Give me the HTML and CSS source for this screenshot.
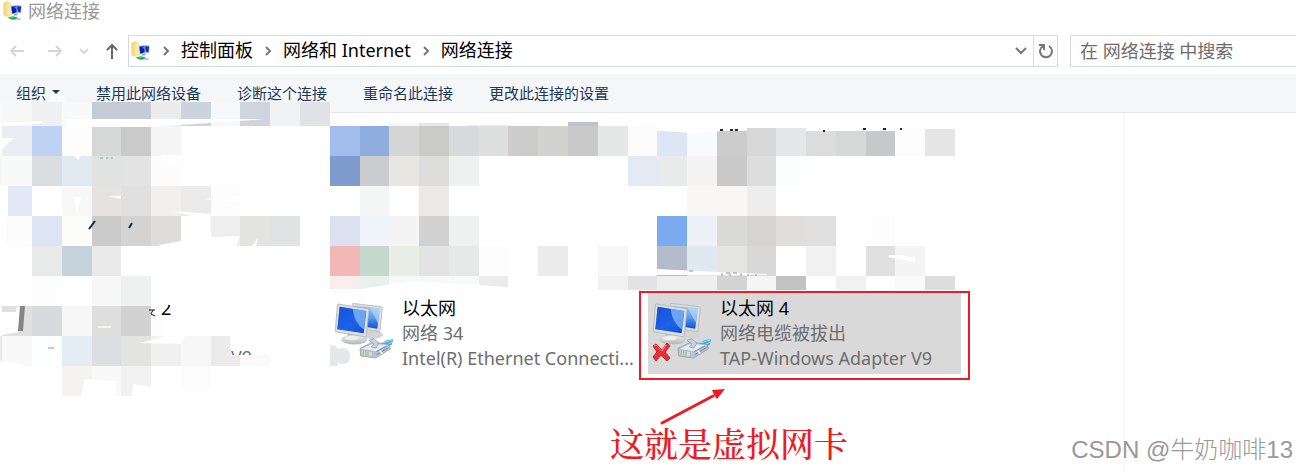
FILE: index.html
```
<!DOCTYPE html>
<html lang="zh-CN">
<head>
    <meta charset="UTF-8">
    <meta name="viewport" content="width=device-width, initial-scale=1.0">
    <title>网络连接</title>
    <link rel="stylesheet" href="styles.css">
</head>
<body>
    <svg class="defs" aria-hidden="true">
        <defs>
            <linearGradient id="screen" x1="0" y1="0" x2="1" y2="1">
                <stop offset="0" stop-color="#0b50cf"/>
                <stop offset="0.55" stop-color="#2470ee"/>
                <stop offset="1" stop-color="#0b45c8"/>
            </linearGradient>
            <linearGradient id="screenBack" x1="0" y1="0" x2="0" y2="1">
                <stop offset="0" stop-color="#9fcdf8"/>
                <stop offset="0.5" stop-color="#5a9cf0"/>
                <stop offset="1" stop-color="#0f4fd6"/>
            </linearGradient>
            <linearGradient id="stand" x1="0" y1="0" x2="0" y2="1">
                <stop offset="0" stop-color="#f2f3f3"/>
                <stop offset="1" stop-color="#b0b3b5"/>
            </linearGradient>
            <symbol id="folder" viewBox="0 0 60 60">
                <path d="M1 5l13-4 5 4 6 1v38l-11 4L1 43z" fill="#f3da83"/>
                <path d="M10 11l14-5v37l-10 6z" fill="#f9e9aa"/>
                <path d="M36 12l20 2-2 23-17-3z" fill="#8ca3cc"/>
                <path d="M39 15l15 2-2 16-13-2z" fill="#0c30bb"/>
                <path d="M22 14l20-3 2 25-18 5z" fill="#becce5"/>
                <path d="M25 17l15-3 1 20-13 4z" fill="#0821ae"/>
                <path d="M33 17l7-1v9z" fill="#4d8df0"/>
                <path d="M32 39l10-3 4 6-12 3z" fill="#aab6bd"/>
                <path d="M14 50l14-4 15 3-2 6-14 1z" fill="#25a64f"/>
                <path d="M22 49l7-2 4 3-7 2z" fill="#63d37b"/>
                <path d="M40 52h13v5H41z" fill="#b9c3cb"/>
            </symbol>
            <symbol id="computers" viewBox="15 45 195 195">
                <ellipse cx="139" cy="149" rx="35" ry="13" fill="#d3d4d5"/>
                <path d="M83 55l86 10q4 1 3 5l-7 67q-1 4-5 3l-70-12z" fill="#dcdedd" stroke="#a9adaf" stroke-width="2"/>
                <path d="M89 62l75 8-7 61-66-10z" fill="url(#screenBack)"/>
                <path d="M134 67l30 4-6 42z" fill="#c3e1fa" opacity=".6"/>
                <path d="M69 143h34l3 21H66z" fill="#b0b3b5"/>
                <ellipse cx="88" cy="164" rx="38" ry="14" fill="url(#stand)" stroke="#b4b6b8" stroke-width="1"/>
                <ellipse cx="80" cy="160" rx="20" ry="6" fill="#f6f7f7" opacity=".7"/>
                <path d="M40 57l89 14q4 1 3 5l-8 76q-1 4-5 3l-86-14q-3-1-2-5l6-76q0-3 3-3z" fill="#dedfdc" stroke="#a3a7a8" stroke-width="2"/>
                <path d="M44 65l80 13-8 67-79-12z" fill="url(#screen)"/>
                <path d="M83 72l40 6-6 56q-28-18-34-62z" fill="#84b8f8" opacity=".75"/>
                <path d="M44 65l39 7q3 36 24 70l-70-10z" fill="#1a55e2" opacity=".55"/>
                <path d="M164 181q15-18 41-18l-5 16-26 12z" fill="#35a9dd"/>
                <path d="M172 174l31-9M178 183l24-12" stroke="#a5e0f6" stroke-width="3"/>
                <path d="M105 190l37-18 48 5 7 14-45 28-45-6z" fill="#b7c5d2" stroke="#8493a8" stroke-width="2"/>
                <path d="M110 191l33-15 43 5-33 18z" fill="#e5edf3"/>
                <path d="M141 173l-9-7 13-5 17 13-9 15-14-3 8-9z" fill="#c3d2df" stroke="#8294a9" stroke-width="2"/>
                <path d="M109 195l33 5v16l-34-5z" fill="#d3dde5" stroke="#8694a6"/>
                <path d="M115 198l-1 12M122 199v12M129 200v12" stroke="#b3ba57" stroke-width="4"/>
                <path d="M154 200l31-17M155 209l35-21" stroke="#7288a0" stroke-width="3"/>
                <path d="M164 197l8 9" stroke="#f2f6fa" stroke-width="5"/>
            </symbol>
        </defs>
    </svg>

    <header class="title-bar">
        <svg class="app-icon" aria-hidden="true"><use href="#folder"/></svg>
        <h1>网络连接</h1>
    </header>

    <div class="nav-bar">
        <nav class="history">
            <button type="button" aria-label="后退"><svg width="16" height="14" viewBox="0 0 16 14"><path d="M15 7H2M7 2L2 7l5 5"/></svg></button>
            <button type="button" aria-label="前进"><svg width="16" height="14" viewBox="0 0 16 14"><path d="M1 7h13M9 2l5 5-5 5"/></svg></button>
            <button type="button" class="recent" aria-label="最近位置"><svg width="10" height="8" viewBox="0 0 10 8"><path d="M1 2l4 4 4-4"/></svg></button>
            <button type="button" class="up" aria-label="向上"><svg width="14" height="16" viewBox="0 0 14 16"><path d="M7 16V2M2 7l5-5 5 5"/></svg></button>
        </nav>
        <div class="address">
            <svg class="app-icon" aria-hidden="true"><use href="#folder"/></svg>
            <svg class="arrow" viewBox="0 0 8 10"><path d="M2 1l4 4-4 4"/></svg>
            <a href="#">控制面板</a>
            <svg class="arrow" viewBox="0 0 8 10"><path d="M2 1l4 4-4 4"/></svg>
            <a href="#">网络和 Internet</a>
            <svg class="arrow" viewBox="0 0 8 10"><path d="M2 1l4 4-4 4"/></svg>
            <a href="#">网络连接</a>
            <button type="button" class="drop" aria-label="以前的位置"><svg width="12" height="8" viewBox="0 0 12 8"><path d="M1 1l5 5 5-5"/></svg></button>
            <button type="button" class="refresh" aria-label="刷新"><svg width="16" height="16" viewBox="0 0 16 16"><path d="M11 3a6 6 0 1 1-6 0M1 2h5v5"/></svg></button>
        </div>
        <input class="search" type="search" aria-label="搜索" placeholder="在 网络连接 中搜索">
    </div>

    <div class="toolbar">
        <button type="button" class="organize">组织<span class="caret"></span></button>
        <button type="button">禁用此网络设备</button>
        <button type="button">诊断这个连接</button>
        <button type="button">重命名此连接</button>
        <button type="button">更改此连接的设置</button>
    </div>

    <main class="content">
        <ul class="connections">
            <li class="connection">
                <svg class="device" aria-hidden="true"><use href="#computers"/></svg>
                <div class="info">
                    <h2>以太网</h2>
                    <p>网络 34</p>
                    <p>Intel(R) Ethernet Connecti...</p>
                </div>
            </li>
            <li class="connection selected">
                <svg class="device" viewBox="0 0 65 65" aria-hidden="true">
                    <use href="#computers" width="65" height="65"/>
                    <path d="M5 46l3-2 6 6 5-7 3 3-5 6 5 6-3 3-6-6-5 6-3-4 4-5z" fill="#e8303a" stroke="#c4202a"/>
                    <path d="M6 46l2-1 6 6 4-6" fill="none" stroke="#f59294"/>
                </svg>
                <div class="info">
                    <h2>以太网 4</h2>
                    <p>网络电缆被拔出</p>
                    <p>TAP-Windows Adapter V9</p>
                </div>
            </li>
        </ul>
        <aside class="details"></aside>
    </main>

    <svg class="overlay" width="1296" height="472" viewBox="0 0 1296 472">
        <path d="M0 104L47 102l4-6h13l3 6 26 0h180l57 4v18H0z" fill="#f8f9fa"/>
        <path d="M330 116h12q10 0 10 6v4h-22z" fill="#fcfcfc"/>
        <g id="mosaic" shape-rendering="crispEdges"></g>

        <!-- eraser strokes -->
        <g fill="#fff">
            <path d="M67 119h150l48 0-55 4-60 4H67zM0 123l42-2v2l-40 3zM2 138l12 0-12 11zM74 156l4 4 3-4zM162 155h20v9l-15 3zM74 197h7l-4 18zM108 196h13v3zM203 199l37-3v6zM173 211l38 3v2h-20zM159 245l22-4v5h-22zM211 237l29-1-4 10h-25zM252 246l6-8-2 8z"/>
            <path d="M139 343l18-4 8-3h20l-4 8zM230 336h10v19h-10zM85 379l31 2v15H81zM133 384l18 3v10h-19zM17 307l5 1-4 24-16 3V312h14zM0 361l23 3v4H0z"/>
            <path d="M360 289l55-8 94 6v6H330v-4zM657 269l60 3 50 2v1H657zM890 255h10l15 3v4l-27-5zM657 125l4 6 35 2 52-4h-60z"/>
        </g>
        <path d="M20 306l5 0-2 25h-5z" fill="#858585"/>
        <path d="M89 229l6-8M129 228l3-5" stroke="#182434" stroke-width="2"/>
        <path d="M100 158h3m3 0h2m3 0h2M48 348h6" stroke="#889bad"/>
        <path d="M98 327h13" stroke="#f7f3ee" stroke-width="2"/>
        <path d="M149 310h6m-2 0l-2 4 4 2" stroke="#111" fill="none"/>
        <path d="M720 130h3m7 0h3m2 0h3m85 1h2m38-2h3m17 0h3m14 0h2" stroke="#26262b" stroke-width="2"/>
        <path d="M722 273v3m4-3h4v3m3-3h4m4 0v3m6-1h2m6 0h2M689 271h4" stroke="#929292" fill="none"/>
        <path d="M330 345q6 0 8 4 12-4 12 7t-12 7l-1 3h-7z" fill="#e6e7e9"/>
        <clipPath id="eraseTop"><path d="M158 305h20v15h-20z"/></clipPath>
        <clipPath id="eraseBottom"><path d="M231 345h30v10h-30z"/></clipPath>
        <text class="left-over dark" x="161" y="315" clip-path="url(#eraseTop)">2</text>
        <text class="left-over" x="231" y="364" clip-path="url(#eraseBottom)">V9</text>

        <!-- red annotation -->
        <rect x="640" y="292" width="329" height="87" fill="none" stroke="#ed1c24" stroke-width="2"/>
        <path d="M662 423l51-27" stroke="#ed1c24" stroke-width="3" stroke-linecap="round"/>
        <path d="M725 389l-8 10-3-4-2-5z" fill="#ed1c24"/>
        <text class="note" x="610" y="457">这就是虚拟网卡</text>
    </svg>
    <div class="watermark">CSDN @牛奶咖啡13</div>

    <script>
        // [上, 高, [左, 右, 颜色] ...]
        const rows = [
            [102, 24, [2, 32, "#f7f7f7"], [32, 62, "#eff0f2"], [62, 92, "#f8faf9"], [92, 151, "#c4cbd5"], [151, 181, "#ebecee"], [181, 211, "#ccd3dc"], [211, 240, "#f6f8fa"], [240, 270, "#cfd5df"], [270, 300, "#f1f2f4"], [300, 330, "#e1e2e6"]],
            [126, 30, [2, 32, "#ecedf3"], [32, 62, "#bed3f3"], [62, 92, "#fdfdfd"], [92, 121, "#d5d8d7"], [121, 151, "#cacaca"], [151, 181, "#f5f5f5"]],
            [156, 30, [0, 2, "#f3f6f4"], [2, 32, "#f8faf9"], [32, 62, "#dadee0"], [62, 92, "#e2eaf1"], [92, 121, "#e1e3e3"], [121, 151, "#e3e3e3"], [151, 181, "#fcfcfc"]],
            [186, 30, [8, 32, "#e2e8f6"], [62, 92, "#f8f8f8"], [92, 121, "#e5e3e2"], [121, 151, "#e0e0e1"], [151, 181, "#f2f0ef"], [181, 211, "#ebebeb"], [211, 240, "#fdfdfd"]],
            [216, 30, [6, 32, "#fcfcfc"], [32, 62, "#dce5f4"], [62, 92, "#fcfcfa"], [92, 121, "#cacaca"], [121, 151, "#d3d3d3"], [151, 181, "#dddcda"], [211, 240, "#eeeeee"], [240, 270, "#e3e3e1"], [270, 300, "#e1e2e4"]],
            [246, 30, [32, 62, "#e8eaea"], [62, 92, "#c5d1db"], [92, 121, "#e9e9e9"]],
            [276, 30, [32, 62, "#fdfdfd"], [92, 121, "#f7f7f7"], [121, 151, "#eff1f1"]],
            [306, 30, [2, 32, "#e0e0e0"], [32, 62, "#d9dadd"], [62, 92, "#f7f7f8"], [92, 121, "#dedede"], [121, 151, "#d2d2d2"], [151, 165, "#fdfdfd"]],
            [336, 30, [0, 2, "#eaeaea"], [2, 32, "#f9f9f9"], [32, 62, "#fdfeff"], [62, 92, "#e4edf4"], [92, 121, "#dcdee1"], [121, 151, "#e3e3e1"], [151, 181, "#f0f0f0"], [181, 211, "#f7f7f7"], [211, 240, "#ebebeb"]],
            [355, 11, [240, 270, "#fafafa"]],
            [366, 30, [62, 92, "#f4f3f2"], [92, 121, "#f9f9f9"], [121, 151, "#f1f1f1"]],
            [366, 24, [181, 211, "#fdfdfd"]],
            [123, 3, [389, 419, "#f7f7f7"], [419, 449, "#e7e7e7"]],
            [125, 1, [468, 508, "#e9ecec"]],
            [122, 4, [568, 598, "#bcc3cc"]],
            [126, 30, [330, 360, "#a2bdec"], [360, 389, "#90aedd"], [389, 419, "#d5d5d5"], [419, 449, "#cacac8"], [449, 479, "#d8dadd"], [479, 508, "#dce0df"], [508, 538, "#cccccc"], [538, 568, "#d2d2cf"], [568, 598, "#c9c9c9"], [598, 628, "#e5e8e7"], [628, 657, "#fcfcfc"]],
            [131, 25, [657, 687, "#dce6f4"], [687, 717, "#f8fbfd"], [717, 747, "#cccccc"]],
            [128, 28, [747, 776, "#d7d7d7"], [776, 806, "#e6e7e9"]],
            [131, 25, [806, 836, "#dcdcdc"], [836, 866, "#d6d8d7"], [866, 895, "#c7c8ca"], [895, 925, "#fdfdfd"]],
            [129, 27, [925, 955, "#e5e5e5"]],
            [156, 30, [330, 360, "#7e9ccd"], [360, 389, "#cbccce"], [389, 419, "#e7e6e1"], [419, 449, "#dddddc"], [449, 479, "#eef1f0"], [628, 657, "#e5e9f3"], [657, 687, "#e8ebea"], [687, 717, "#f4f4f4"], [717, 747, "#c9c9c9"], [747, 776, "#dddddd"], [776, 806, "#fcfefe"]],
            [186, 30, [360, 389, "#f3f6f5"], [419, 449, "#eae9e7"], [687, 747, "#f8f7f5"], [747, 776, "#ededed"]],
            [216, 30, [330, 360, "#dbe1f1"], [360, 389, "#f0f5f9"], [389, 419, "#f4f4f4"], [419, 449, "#d2d2d2"], [449, 479, "#eef1f0"], [657, 687, "#7caaf0"], [687, 717, "#edf1f7"], [717, 747, "#dadad8"], [747, 776, "#d5d4d2"], [776, 806, "#dfdedc"], [806, 836, "#e0e0e1"], [866, 895, "#fdfdfd"]],
            [246, 30, [330, 360, "#f2b8b8"], [360, 389, "#c4d8cc"], [389, 419, "#e9eee7"], [419, 449, "#e3e3e3"], [449, 479, "#e6e9e8"], [479, 508, "#fdfdfd"], [538, 568, "#ebebeb"], [598, 628, "#f7f7f7"], [657, 687, "#b4bbca"], [687, 717, "#e0e8f0"], [717, 747, "#e4e5e2"], [747, 776, "#d8d8d8"], [806, 836, "#f1f1f1"], [866, 895, "#e0e0e0"], [895, 925, "#f4f4f4"]],
            [276, 14, [330, 360, "#f9eeed"], [360, 389, "#e9f1ec"], [389, 449, "#f7f8f8"], [449, 479, "#f8faf9"], [479, 508, "#ebebeb"], [598, 628, "#f1f1f1"], [628, 657, "#e3e3e5"], [657, 717, "#efefef"], [717, 747, "#d3d3d3"], [747, 776, "#f5f5f5"], [776, 806, "#c2c2c2"], [836, 866, "#f1f1f1"], [895, 925, "#fafafa"], [925, 955, "#dddddd"]]
        ];
        const mosaic = document.getElementById("mosaic");
        rows.forEach(function([top, height, ...cells]) {
            cells.forEach(function([left, right, color]) {
                const rect = document.createElementNS("http://www.w3.org/2000/svg", "rect");
                rect.setAttribute("x", left);
                rect.setAttribute("y", top);
                rect.setAttribute("width", right - left);
                rect.setAttribute("height", height);
                rect.setAttribute("fill", color);
                mosaic.appendChild(rect);
            });
        });
    </script>
</body>
</html>
```
FILE: styles.css
```
* {
    box-sizing: border-box;
}
body {
    margin: 0;
    min-height: 100vh;
    display: flex;
    flex-direction: column;
    position: relative;
    overflow: hidden;
    background-color: #fff;
    color: #000;
    font-family: "Noto Sans", "Noto Sans CJK SC", sans-serif;
    font-size: 18px;
    font-weight: 400;
}
h1, h2, p, ul {
    margin: 0;
    padding: 0;
    font-size: 18px;
    font-weight: 400;
}
button {
    padding: 0;
    border: none;
    background: none;
    color: inherit;
    font: inherit;
}
a {
    color: inherit;
    text-decoration: none;
}
.defs {
    position: absolute;
    width: 0;
    height: 0;
}
.app-icon {
    width: 20px;
    height: 20px;
    flex: none;
}
.title-bar {
    display: flex;
    align-items: center;
    gap: 5px;
    height: 22px;
    padding-left: 3px;
    color: #999;
}
.title-bar h1 {
    line-height: 22px;
}
.nav-bar {
    display: flex;
    height: 32px;
    margin-top: 13px;
}
.history {
    display: flex;
    align-items: center;
    gap: 16px;
    width: 128px;
    padding-left: 9px;
}
.history button {
    display: flex;
}
.history svg, .address svg.arrow, .drop svg, .refresh svg {
    fill: none;
    stroke: #d5d5d5;
    stroke-width: 2;
}
.history button:nth-child(2) {
    margin-left: 6px;
}
.history .up svg {
    stroke: #666;
}
.address {
    display: flex;
    flex: 1;
    align-items: center;
    border: 1px solid #d9d9d9;
    padding-left: 2px;
    line-height: 28px;
}
.address a {
    margin-bottom: 2px;
}
.address svg.arrow {
    width: 8px;
    height: 10px;
    margin: 0 11px;
    stroke: #777;
}
.drop, .refresh {
    display: flex;
    align-items: center;
    justify-content: center;
    align-self: stretch;
    width: 24px;
}
.drop {
    margin-left: auto;
}
.refresh {
    border-left: 1px solid #d9d9d9;
}
.drop svg, .refresh svg {
    stroke: #777;
}
.search {
    width: 226px;
    margin-left: 12px;
    padding: 0 9px;
    border: 1px solid #d9d9d9;
    border-right: none;
    font: inherit;
}
.search::placeholder {
    color: #6d6d6d;
}
.toolbar {
    display: flex;
    gap: 36px;
    height: 39px;
    margin-top: 7px;
    padding: 0 16px 2px;
    border-bottom: 1px solid #e5e8eb;
    background-color: #f5f6f8;
    color: #1e395b;
    font-size: 15px;
}
.organize {
    display: flex;
    align-items: center;
    gap: 6px;
}
.caret {
    border: 4px solid transparent;
    border-top-color: #1e395b;
    border-bottom: none;
}
.content {
    display: flex;
    flex: 1;
}
.connections {
    display: grid;
    grid-template-columns: repeat(3, 313px);
    gap: 5px;
    flex: 1;
    align-content: start;
    padding: 180px 0 0 12px;
    list-style: none;
}
.connection {
    display: flex;
    gap: 7px;
    padding: 3px 0;
    white-space: nowrap;
}
.connection:first-child {
    grid-column: 2;
}
.selected {
    background-color: #d9d9d9;
}
.device {
    width: 65px;
    height: 65px;
    margin-top: 4px;
    flex: none;
}
.info h2, .info p {
    line-height: 25px;
}
.info p {
    color: #6d6d6d;
}
.details {
    width: 172px;
    border-left: 1px solid #f3f3f3;
}
.overlay {
    position: absolute;
    top: 0;
    left: 0;
    pointer-events: none;
}
.left-over {
    fill: #6d6d6d;
}
.dark {
    fill: #000;
}
.note {
    fill: #ed1c24;
    font-family: "Noto Serif CJK SC", "Noto Sans CJK SC", serif;
    font-size: 34px;
    font-weight: 500;
}
.watermark {
    position: absolute;
    right: 3px;
    bottom: 4px;
    color: #999;
    font-family: "Liberation Sans", "Noto Sans CJK SC", sans-serif;
    font-size: 24px;
    line-height: 36px;
    font-weight: 300;
    text-shadow: -1px -1px 0 #fff;
}
```
